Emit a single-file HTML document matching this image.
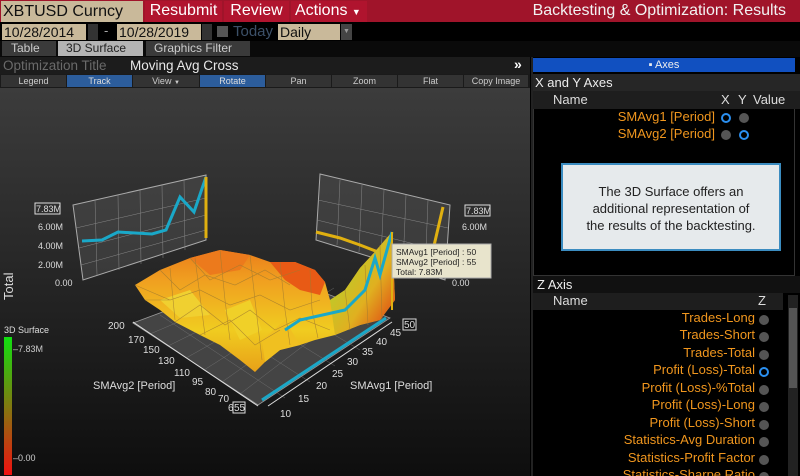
<!DOCTYPE html>
<html><head><meta charset="utf-8"><style>
*{margin:0;padding:0;box-sizing:border-box}
html,body{width:800px;height:476px;overflow:hidden}
body{background:#000;position:relative;font-family:"Liberation Sans","DejaVu Sans",sans-serif;}
.a{position:absolute;white-space:nowrap}
.tan{background:#c9b99a;color:#111;}
.red{background:#a8132c;color:#fff;}
.tb{position:absolute;top:75px;height:12px;font-size:9px;color:#ccc;text-align:center;line-height:12px;background:#333}
.tb.b{background:#2c5d9c;color:#ddd}
.or{color:#f0961e;font-size:13px;text-align:right}
.dot{position:absolute;width:10px;height:10px;border-radius:5px;background:#555}
.dot.on{background:#000;border:2.5px solid #2a8ff0}
</style></head><body>
<div class="a" style="left:0;top:0;width:800px;height:22px;background:#a0142a"></div>
<div class="a tan" style="top:1px;left:1px;width:142px;height:21px;font-size:16px;line-height:21px;padding-left:2px">XBTUSD Curncy</div>
<div class="a red" style="left:145px;top:1px;width:77px;height:21px;font-size:16px;line-height:20px;text-align:center;background:#b0142e">Resubmit</div>
<div class="a red" style="left:224px;top:1px;width:65px;height:21px;font-size:16px;line-height:20px;text-align:center;background:#b0142e">Review</div>
<div class="a red" style="left:291px;top:1px;width:76px;height:21px;font-size:16px;line-height:20px;padding-left:4px;background:#b0142e">Actions <span style="font-size:9px">▼</span></div>
<div class="a" style="right:14px;top:1px;color:#f2f2f2;font-size:16px;line-height:20px">Backtesting &amp; Optimization: Results</div>
<div class="a tan" style="left:2px;top:24px;width:84px;height:16px;font-size:14px;line-height:16px;padding-left:2px">10/28/2014</div>
<div class="a" style="left:88px;top:24px;width:10px;height:16px;background:#333"></div>
<div class="a" style="left:104px;top:23px;color:#aaa;font-size:13px">-</div>
<div class="a tan" style="left:117px;top:24px;width:84px;height:16px;font-size:14px;line-height:16px;padding-left:2px">10/28/2019</div>
<div class="a" style="left:202px;top:24px;width:10px;height:16px;background:#333"></div>
<div class="a" style="left:217px;top:26px;width:11px;height:11px;background:#555"></div>
<div class="a" style="left:233px;top:23px;color:#3c5068;font-size:15px">Today</div>
<div class="a tan" style="left:278px;top:24px;width:62px;height:16px;font-size:14px;line-height:16px;padding-left:2px">Daily</div>
<div class="a" style="left:341px;top:24px;width:11px;height:16px;background:#444;color:#999;font-size:7px;text-align:center;line-height:16px">▼</div>
<div class="a" style="left:0;top:41px;width:800px;height:16px;background:#0a0a0a"></div>
<div class="a" style="left:2px;top:41px;width:54px;height:15px;background:#3a3a3a;color:#ccc;font-size:12px;line-height:15px;padding-left:9px">Table</div>
<div class="a" style="left:58px;top:41px;width:85px;height:15px;background:#b4b4b4;color:#222;font-size:12px;line-height:15px;padding-left:8px">3D Surface</div>
<div class="a" style="left:146px;top:41px;width:104px;height:15px;background:#3a3a3a;color:#ccc;font-size:12px;line-height:15px;padding-left:8px">Graphics Filter</div>
<div class="a" style="left:0;top:57px;width:530px;height:17px;background:#1c1c1c"></div>
<div class="a" style="left:3px;top:58px;color:#6a6a6a;font-size:13.5px">Optimization Title</div>
<div class="a" style="left:130px;top:58px;color:#e8e8e8;font-size:13.5px">Moving Avg Cross</div>
<div class="a" style="left:514px;top:56px;color:#fff;font-size:14px;font-weight:bold">»</div>
<div class="a" style="left:0;top:74px;width:530px;height:14px;background:#1a1a1a"></div>
<div class="tb" style="left:1px;width:65px">Legend</div>
<div class="tb b" style="left:67px;width:65px">Track</div>
<div class="tb" style="left:133px;width:66px">View <span style="font-size:6px">▼</span></div>
<div class="tb b" style="left:200px;width:65px">Rotate</div>
<div class="tb" style="left:266px;width:65px">Pan</div>
<div class="tb" style="left:332px;width:65px">Zoom</div>
<div class="tb" style="left:398px;width:65px">Flat</div>
<div class="tb" style="left:464px;width:64px">Copy Image</div>
<svg class="a" style="left:0;top:88px" width="530" height="388" viewBox="0 88 530 388">
<defs>
<linearGradient id="bg" x1="0" y1="0" x2="0" y2="1"><stop offset="0" stop-color="#3c3c3c"/><stop offset="1" stop-color="#0e0e0e"/></linearGradient>
<linearGradient id="lg" x1="0" y1="0" x2="0" y2="1"><stop offset="0" stop-color="#10e010"/><stop offset="0.5" stop-color="#807a10"/><stop offset="1" stop-color="#f01010"/></linearGradient>
<linearGradient id="sf" x1="0" y1="0" x2="0" y2="1"><stop offset="0" stop-color="#e86a18"/><stop offset="0.35" stop-color="#f0a020"/><stop offset="0.7" stop-color="#f0cc20"/><stop offset="1" stop-color="#e8a018"/></linearGradient>
<linearGradient id="gw" x1="0" y1="0" x2="1" y2="1"><stop offset="0" stop-color="#a0e030"/><stop offset="0.6" stop-color="#e0b020"/><stop offset="1" stop-color="#e03010"/></linearGradient>
</defs>
<rect x="0" y="88" width="530" height="388" fill="url(#bg)"/>
<polygon points="73,205 206,175 206,240 83,280" fill="#555" fill-opacity="0.45" stroke="#aaa" stroke-width="1"/>
<g stroke="#888" stroke-width="0.5" fill="none"><path d="M95,200 L97,275 M118,195 L119,270 M140,190 L141,264 M162,185 L163,258 M184,180 L185,250 M76,228 L206,198 M79,248 L206,215 M81,265 L206,230"/></g>
<polyline points="82,241 102,240 118,232 152,234 166,230 180,197 194,212 206,177" fill="none" stroke="#1aa8c8" stroke-width="3"/>
<line x1="206" y1="177" x2="206" y2="238" stroke="#e0b010" stroke-width="3"/>
<g fill="#ddd" font-size="9"><rect x="35" y="203" width="25" height="11" fill="none" stroke="#ddd"/><text x="36" y="212">7.83M</text><text x="38" y="230">6.00M</text><text x="38" y="249">4.00M</text><text x="38" y="268">2.00M</text><text x="55" y="286">0.00</text></g>
<polygon points="320,174 450,205 445,280 316,240" fill="#555" fill-opacity="0.45" stroke="#aaa" stroke-width="1"/>
<g stroke="#888" stroke-width="0.5" fill="none"><path d="M340,180 L337,245 M362,185 L359,252 M384,190 L381,259 M406,195 L403,266 M428,200 L425,273 M318,200 L448,228 M317,220 L447,252"/></g>
<polyline points="316,232 340,238 360,245 378,252 395,262 410,272 425,276 433,250 443,207" fill="none" stroke="#e0b010" stroke-width="3"/>
<g fill="#ddd" font-size="9"><rect x="465" y="205" width="25" height="11" fill="none" stroke="#ddd"/><text x="466" y="214">7.83M</text><text x="462" y="230">6.00M</text><text x="452" y="286">0.00</text></g>
<polygon points="133,323 258,405 390,318 270,272" fill="#444" stroke="#999" stroke-width="0.8"/>
<g stroke="#777" stroke-width="0.4"><path d="M150,334 L286,276 M168,346 L302,280 M186,358 L318,284 M204,370 L334,288 M222,382 L350,292 M240,394 L366,298 M160,315 L285,398 M190,305 L310,382 M220,295 L335,366 M250,285 L360,350"/></g>
<line x1="262" y1="400" x2="386" y2="318" stroke="#1aa8c8" stroke-width="3"/>
<polygon points="135,285 160,270 190,258 220,250 250,255 270,262 295,262 315,270 325,282 330,300 345,290 360,268 372,255 385,240 392,232 395,300 380,320 360,325 335,335 315,340 300,345 280,350 265,362 255,372 240,360 220,345 200,335 175,322 160,310 145,300" fill="url(#sf)"/>
<polygon points="270,262 295,262 315,270 325,282 320,295 300,290 285,280" fill="#e85a15"/>
<polygon points="190,258 220,250 250,255 240,270 210,275" fill="#ec7a1c"/>
<polygon points="160,300 190,290 210,315 180,318" fill="#f0d030"/>
<polygon points="225,310 250,300 262,330 240,340" fill="#f0d028"/>
<polygon points="262,340 285,320 300,345 280,350 265,362" fill="#f0c020"/>
<polygon points="330,300 345,290 360,268 372,255 385,240 392,232 395,300 380,320 360,325 335,335" fill="url(#gw)"/>
<g stroke="#a07a30" stroke-width="0.6" fill="none" opacity="0.8">
<path d="M135,285 L170,300 L200,290 L230,305 L260,295 L290,310 L320,300 M160,270 L180,290 L205,275 L235,285 L265,270 L290,285 M190,258 L210,280 L240,265 L270,280 L300,270 M175,322 L200,305 L225,325 L250,310 L275,330 L300,318 L330,330 M145,300 L170,300 M200,335 L230,320 L255,345 L280,330 M220,250 L225,300 L230,340 M250,255 L255,300 L262,360 M280,262 L285,310 L290,345 M310,270 L312,310 L318,338 M345,290 L350,330 M365,265 L368,325 M380,245 L382,320 M170,268 L175,320 M195,258 L205,335"/>
</g>
<polyline points="285,330 300,320 345,310 365,290 375,258 380,275 392,232" fill="none" stroke="#1aa8c8" stroke-width="3"/>
<line x1="392" y1="232" x2="392" y2="310" stroke="#e0b010" stroke-width="2"/>
<line x1="133" y1="322" x2="258" y2="406" stroke="#ddd" stroke-width="1"/>
<line x1="268" y1="406" x2="392" y2="322" stroke="#ddd" stroke-width="1"/>
<g fill="#ddd" font-size="10">
<text x="108" y="329">200</text><text x="128" y="343">170</text><text x="143" y="353">150</text><text x="158" y="364">130</text><text x="174" y="376">110</text><text x="192" y="385">95</text><text x="205" y="395">80</text><text x="218" y="402">70</text><text x="228" y="411">65</text>
<rect x="233" y="402" width="12" height="11" fill="#111" stroke="#ddd"/><text x="234" y="411">55</text>
<text x="280" y="417">10</text><text x="298" y="402">15</text><text x="316" y="389">20</text><text x="332" y="377">25</text><text x="347" y="365">30</text><text x="362" y="355">35</text><text x="376" y="345">40</text><text x="390" y="336">45</text>
<rect x="403" y="319" width="13" height="11" fill="#111" stroke="#ddd"/><text x="404" y="328">50</text>
<text x="93" y="389" font-size="11">SMAvg2 [Period]</text><text x="350" y="389" font-size="11">SMAvg1 [Period]</text>
</g>
<text x="0" y="0" fill="#ddd" font-size="13" transform="translate(13,300) rotate(-90)">Total</text>
<rect x="392" y="244" width="99" height="34" fill="#e8e4cc" stroke="#aaa"/>
<g fill="#222" font-size="8.5"><text x="396" y="255">SMAvg1 [Period] : 50</text><text x="396" y="265">SMAvg2 [Period] : 55</text><text x="396" y="275">Total: 7.83M</text></g>
<text x="4" y="333" fill="#ddd" font-size="9">3D Surface</text>
<rect x="4" y="337" width="8" height="138" fill="url(#lg)"/>
<text x="13" y="352" fill="#ccc" font-size="9">–7.83M</text>
<text x="13" y="461" fill="#ccc" font-size="9">–0.00</text>
</svg>
<div class="a" style="left:531px;top:57px;width:2px;height:419px;background:#222"></div>
<div class="a" style="left:533px;top:58px;width:262px;height:14px;background:#1150c0;color:#eee;font-size:11px;line-height:14px;text-align:center">▪ Axes</div>
<div class="a" style="left:533px;top:74px;width:267px;height:17px;background:#262626;color:#eee;font-size:13px;line-height:17px;padding-left:2px">X and Y Axes</div>
<div class="a" style="left:533px;top:91px;width:267px;height:18px;background:#1e1e1e"></div>
<div class="a" style="left:553px;top:92px;color:#ddd;font-size:13px">Name</div>
<div class="a" style="left:721px;top:92px;color:#ddd;font-size:13px">X</div>
<div class="a" style="left:738px;top:92px;color:#ddd;font-size:13px">Y</div>
<div class="a" style="left:753px;top:92px;color:#ddd;font-size:13px">Value</div>
<div class="a" style="left:533px;top:109px;width:262px;height:167px;border:1px solid #333;border-top:none"></div>
<div class="a or" style="right:85px;top:109px">SMAvg1 [Period]</div>
<div class="dot on" style="left:721px;top:113px"></div><div class="dot" style="left:739px;top:113px"></div>
<div class="a or" style="right:85px;top:126px">SMAvg2 [Period]</div>
<div class="dot" style="left:721px;top:130px"></div><div class="dot on" style="left:739px;top:130px"></div>
<div class="a" style="left:561px;top:163px;width:220px;height:88px;background:#e6eaec;border:2px solid #3b8cc0;color:#222;font-size:13px;line-height:17px;text-align:center;padding-top:18px">The 3D Surface offers an<br>additional representation of<br>the results of the backtesting.</div>
<div class="a" style="left:533px;top:276px;width:267px;height:17px;color:#eee;font-size:13px;line-height:17px;padding-left:4px;background:#111">Z Axis</div>
<div class="a" style="left:533px;top:293px;width:250px;height:17px;background:#1e1e1e"></div>
<div class="a" style="left:553px;top:293px;color:#ddd;font-size:13px">Name</div>
<div class="a" style="left:758px;top:293px;color:#ddd;font-size:13px">Z</div>
<div class="a" style="left:788px;top:295px;width:10px;height:181px;background:#222"></div>
<div class="a" style="left:789px;top:308px;width:8px;height:80px;background:#555"></div>
<div class="a or" style="right:45px;top:310px">Trades-Long</div><div class="dot" style="left:759px;top:315px"></div>
<div class="a or" style="right:45px;top:327px">Trades-Short</div><div class="dot" style="left:759px;top:332px"></div>
<div class="a or" style="right:45px;top:345px">Trades-Total</div><div class="dot" style="left:759px;top:350px"></div>
<div class="a or" style="right:45px;top:362px">Profit (Loss)-Total</div><div class="dot on" style="left:759px;top:367px"></div>
<div class="a or" style="right:45px;top:380px">Profit (Loss)-%Total</div><div class="dot" style="left:759px;top:385px"></div>
<div class="a or" style="right:45px;top:397px">Profit (Loss)-Long</div><div class="dot" style="left:759px;top:402px"></div>
<div class="a or" style="right:45px;top:415px">Profit (Loss)-Short</div><div class="dot" style="left:759px;top:420px"></div>
<div class="a or" style="right:45px;top:432px">Statistics-Avg Duration</div><div class="dot" style="left:759px;top:437px"></div>
<div class="a or" style="right:45px;top:450px">Statistics-Profit Factor</div><div class="dot" style="left:759px;top:455px"></div>
<div class="a or" style="right:45px;top:467px">Statistics-Sharpe Ratio</div><div class="dot" style="left:759px;top:472px"></div>
</body></html>
